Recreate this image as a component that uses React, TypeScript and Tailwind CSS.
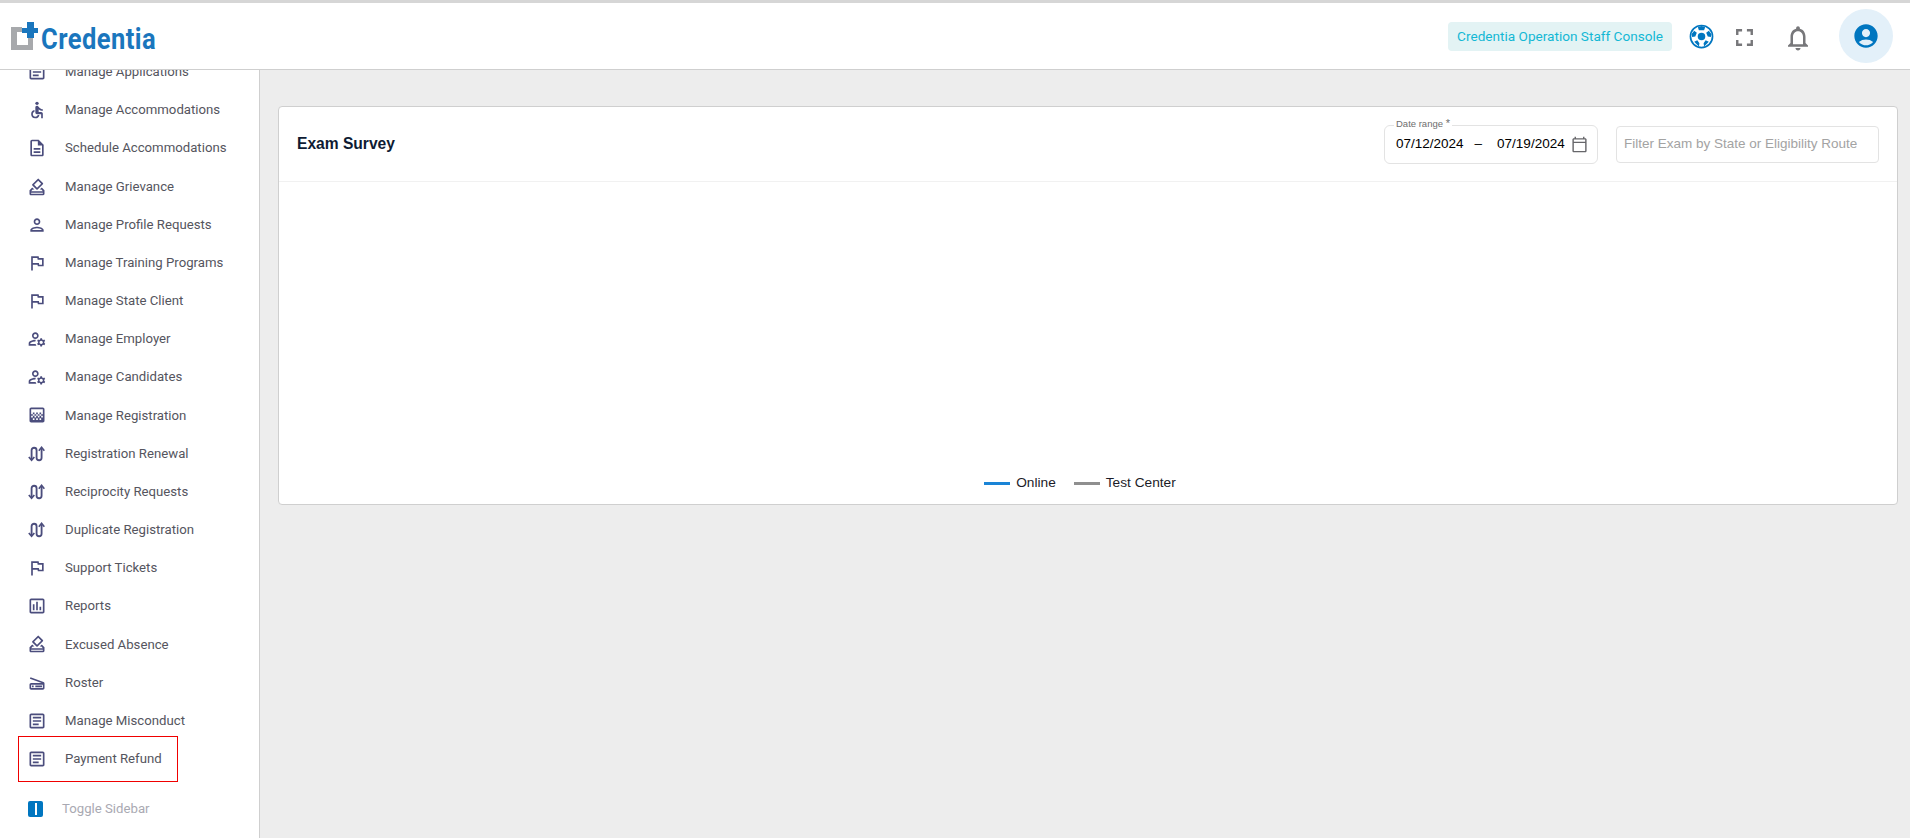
import type { ReactNode } from "react";
import {
  MdAccessible,
  MdAccountCircle,
  MdFullscreen,
  MdGradient,
  MdOutlineArticle,
  MdOutlineAssessment,
  MdOutlineAssistantPhoto,
  MdOutlineCalendarToday,
  MdOutlineDescription,
  MdOutlineHowToVote,
  MdOutlineManageAccounts,
  MdOutlineNotifications,
  MdOutlinePerson,
  MdOutlineScanner,
} from "react-icons/md";

function RouteIcon({ size = 20 }: { size?: number }) {
  return (
    <svg width={size} height={size} viewBox="0 0 24 24" fill="none" stroke="currentColor" strokeWidth="2.2">
      <path d="M5.5 18V7.5a3 3 0 0 1 6 0v9a3 3 0 0 0 6 0V5" />
      <path d="M2.2 15.5 5.5 19.5l3.3-4M14.2 8l3.3-4 3.3 4" strokeWidth="2" />
    </svg>
  );
}

function SupportBall() {
  return (
    <svg width="25" height="25" viewBox="0 0 24 24" fill="none" className="text-[#0076c0]">
      <circle cx="12" cy="12" r="10.6" stroke="currentColor" strokeWidth="1.6" />
      <circle cx="12" cy="12" r="3.6" fill="currentColor" />
      <path d="M8.5 3 12 2l3.500 1-1 3h-5zM2.500 9.500 5 6.500l2.500 2-1.500 3.500-3 .5zM21.500 9.500 19 6.500l-2.500 2 1.500 3.500 3 .5zM5 17l3-1.500 2 3-.5 3zM19 17l-3-1.500-2 3 .5 3z" fill="currentColor" />
    </svg>
  );
}

function LogoMark() {
  return (
    <svg width="27" height="28" viewBox="0 0 27 28" className="shrink-0">
      <path d="M0 5h11v5H6v13h11v-7h5v12H0z" fill="#a7a9ac" />
      <path d="M16 0h7v6h4v5h-4v5h-7v-5h-5V6h5z" fill="#1a76bd" />
    </svg>
  );
}

const navItems: { label: string; icon: ReactNode }[] = [
  { label: "Manage Applications", icon: <MdOutlineArticle size={20} /> },
  { label: "Manage Accommodations", icon: <MdAccessible size={20} /> },
  { label: "Schedule Accommodations", icon: <MdOutlineDescription size={20} /> },
  { label: "Manage Grievance", icon: <MdOutlineHowToVote size={20} /> },
  { label: "Manage Profile Requests", icon: <MdOutlinePerson size={20} /> },
  { label: "Manage Training Programs", icon: <MdOutlineAssistantPhoto size={20} /> },
  { label: "Manage State Client", icon: <MdOutlineAssistantPhoto size={20} /> },
  { label: "Manage Employer", icon: <MdOutlineManageAccounts size={20} /> },
  { label: "Manage Candidates", icon: <MdOutlineManageAccounts size={20} /> },
  { label: "Manage Registration", icon: <MdGradient size={20} /> },
  { label: "Registration Renewal", icon: <RouteIcon /> },
  { label: "Reciprocity Requests", icon: <RouteIcon /> },
  { label: "Duplicate Registration", icon: <RouteIcon /> },
  { label: "Support Tickets", icon: <MdOutlineAssistantPhoto size={20} /> },
  { label: "Reports", icon: <MdOutlineAssessment size={20} /> },
  { label: "Excused Absence", icon: <MdOutlineHowToVote size={20} /> },
  { label: "Roster", icon: <MdOutlineScanner size={20} /> },
  { label: "Manage Misconduct", icon: <MdOutlineArticle size={20} /> },
  { label: "Payment Refund", icon: <MdOutlineArticle size={20} /> },
];

function Sidebar() {
  return (
    <aside className="relative flex h-full w-[260px] shrink-0 flex-col border-r border-[#cfcfcf] bg-white">
      <div className="flex-1 overflow-hidden">
        <ul className="-mt-[17px] grid auto-rows-[38.17px] pl-[27px]">
          {navItems.map((item) => (
            <li key={item.label} className="flex items-center text-[13.2px] text-[#55555e]">
              <span className="flex w-[38px] shrink-0 justify-start text-[#4b4d7d]">{item.icon}</span>
              {item.label}
            </li>
          ))}
        </ul>
      </div>
      {/* red marker round the last row */}
      <div className="absolute left-[18px] top-[666px] h-[46px] w-[160px] border border-[#f00000]" />
      <div className="flex h-[58px] shrink-0 items-center pl-[28px]">
        <span className="flex h-[16px] w-[15px] items-center justify-center rounded-[2px] bg-[#0076c0]">
          <span className="h-[12px] w-[2px] bg-white" />
        </span>
        <span className="ml-[19px] text-[13.2px] text-[#a9a9b2]">Toggle Sidebar</span>
      </div>
    </aside>
  );
}

function Header() {
  return (
    <header className="flex h-[67px] shrink-0 items-center justify-between border-b border-[#cfcfcf] bg-white pl-[11px] pr-[17px]">
      <div className="flex items-end">
        <LogoMark />
        <span className="-mb-[4px] ml-[3px] origin-left scale-x-[0.88] font-['Roboto',sans-serif] text-[29px] font-bold leading-none tracking-[0.5px] text-[#1a76bd]">
          Credentia
        </span>
      </div>
      <div className="flex items-center">
        <span className="flex h-[29px] items-center rounded-[4px] bg-[#e3f3f4] px-[9px] text-[13.6px] text-[#13b8d4]">
          Credentia Operation Staff Console
        </span>
        <span className="ml-[17px]">
          <SupportBall />
        </span>
        <MdFullscreen size={29} className="ml-[16px] mt-[2px] text-[#77777a]" />
        <MdOutlineNotifications size={30} className="ml-[24px] mt-[3px] text-[#77777a]" />
        <span className="ml-[26px] flex h-[54px] w-[54px] items-center justify-center rounded-full bg-[#e3f0f9] text-[#0076c0]">
          <MdAccountCircle size={28} />
        </span>
      </div>
    </header>
  );
}

function ExamSurvey() {
  return (
    <section className="flex h-[399px] flex-col rounded-[4px] border border-[#cfcfcf] bg-white">
      <div className="flex h-[75px] shrink-0 items-center justify-between border-b border-[#f1f1f1] pl-[18px] pr-[18px]">
        <h2 className="font-['Liberation_Sans',sans-serif] text-[15.6px] font-bold text-[#0e1b33]">Exam Survey</h2>
        <div className="flex items-center">
          <div className="relative flex h-[39px] w-[214px] items-center rounded-[6px] border border-[#e3e3e3] pl-[11px] font-['Liberation_Sans',sans-serif] text-[13.5px] text-black">
            <span className="absolute -top-[8px] left-[9px] bg-white px-[2px] text-[9.5px] leading-[10px] text-[#6e6e6e]">
              Date range <span className="text-[11px]">*</span>
            </span>
            <span>07/12/2024</span>
            <span className="ml-[11px]">–</span>
            <span className="ml-[15px]">07/19/2024</span>
            <MdOutlineCalendarToday size={17} className="ml-[6px] text-[#66666a]" />
          </div>
          <div className="ml-[18px] flex h-[37px] w-[263px] items-center rounded-[4px] border border-[#e3e3e3] pl-[7px] font-['Liberation_Sans',sans-serif] text-[13.5px] text-[#a3a3a3]">
            Filter Exam by State or Eligibility Route
          </div>
        </div>
      </div>
      <div className="flex flex-1 items-end justify-center pb-[13px] pr-[16px] font-['Liberation_Sans',sans-serif] text-[13.7px] leading-[16px] text-[#1c1c28]">
        <span className="mb-[6px] h-[3px] w-[26px] bg-[#1a84d6]" />
        <span className="ml-[6px]">Online</span>
        <span className="mb-[6px] ml-[18px] h-[3px] w-[26px] bg-[#8f8f8f]" />
        <span className="ml-[6px]">Test Center</span>
      </div>
    </section>
  );
}

export default function App() {
  return (
    <div className="flex h-[838px] w-full flex-col overflow-hidden border-t-[3px] border-[#d6d6d6] bg-[#ededed] font-['Roboto',sans-serif]">
      <Header />
      <div className="flex min-h-0 flex-1">
        <Sidebar />
        <main className="flex-1 pl-[18px] pr-[12px] pt-[36px]">
          <ExamSurvey />
        </main>
      </div>
    </div>
  );
}
